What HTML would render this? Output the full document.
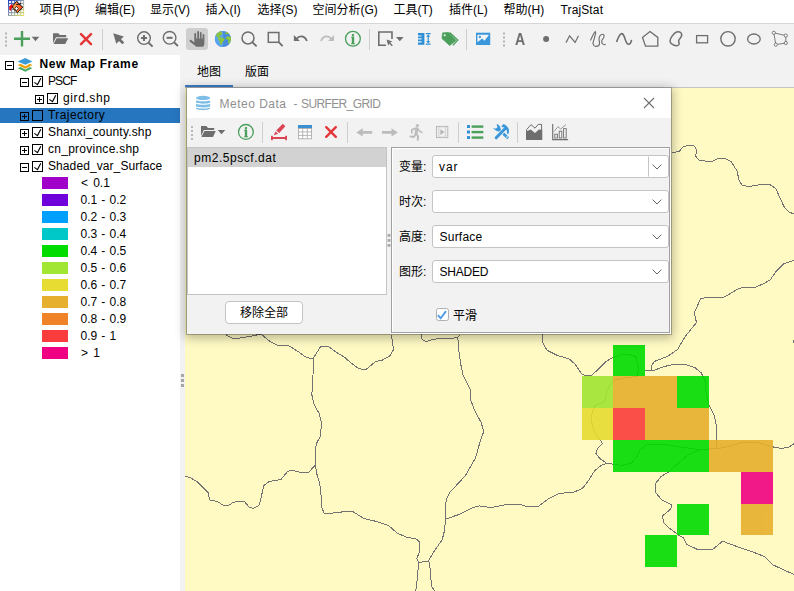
<!DOCTYPE html>
<html lang="zh-CN">
<head>
<meta charset="utf-8">
<title>MeteoInfoMap - TrajStat</title>
<style>
html,body{margin:0;padding:0;}
body{width:794px;height:591px;overflow:hidden;background:#f2f2f2;position:relative;
  font-family:"Liberation Sans","Noto Sans CJK SC",sans-serif;font-size:12px;color:#000;}
.abs{position:absolute;}
.t{position:absolute;white-space:nowrap;line-height:16px;height:16px;font-size:12px;}
#menubar{position:absolute;left:0;top:0;width:794px;height:23px;background:#fff;border-bottom:1px solid #d6d6d6;}
#toolbar{position:absolute;left:0;top:24px;width:794px;height:31px;background:#f2f2f2;}
#tree{position:absolute;left:0;top:55px;width:180px;height:536px;background:#fff;}
#tabs{position:absolute;left:185px;top:55px;width:609px;height:32px;background:#f2f2f2;border-bottom:1px solid #c4c4c4;}
#map{position:absolute;left:185px;top:88px;width:609px;height:503px;background:#fffac4;overflow:hidden;}
#dlg{position:absolute;left:187px;top:88px;width:484px;height:246px;background:#f2f2f2;
  box-shadow:0 2px 10px 2px rgba(0,0,0,.28);}
svg{position:absolute;overflow:visible;}
.sw{position:absolute;left:42px;width:26px;height:12px;}
.xb{position:absolute;width:7px;height:7px;border:1px solid #000;background:#fff;}
.xb i{position:absolute;left:1px;top:3px;width:5px;height:1px;background:#000;}
.xb b{position:absolute;left:3px;top:1px;width:1px;height:5px;background:#000;}
.cb{position:absolute;width:9px;height:9px;border:1px solid #000;background:#fff;}
.combo{position:absolute;left:432px;width:235px;height:21px;border:1px solid #c4c4c4;border-radius:3px;background:#fff;}
.combo span{position:absolute;left:7px;top:3px;line-height:16px;font-size:12px;}
.lbl{position:absolute;left:399px;line-height:16px;font-size:12px;}
</style>
</head>
<body>

<!-- ===== menu bar ===== -->
<div id="menubar">
  <span class="t" style="left:39.5px;top:2px">项目(P)</span>
  <span class="t" style="left:95px;top:2px">编辑(E)</span>
  <span class="t" style="left:150px;top:2px">显示(V)</span>
  <span class="t" style="left:205.5px;top:2px">插入(I)</span>
  <span class="t" style="left:257.5px;top:2px">选择(S)</span>
  <span class="t" style="left:312.5px;top:2px">空间分析(G)</span>
  <span class="t" style="left:393.5px;top:2px">工具(T)</span>
  <span class="t" style="left:449px;top:2px">插件(L)</span>
  <span class="t" style="left:503.5px;top:2px">帮助(H)</span>
  <span class="t" style="left:560.5px;top:2px;letter-spacing:.13px">TrajStat</span>
</div>

<!-- ===== main toolbar ===== -->
<div id="toolbar"></div>

<!-- ===== layer tree ===== -->
<div id="tree">
  <div class="abs" style="left:0;top:53px;width:180px;height:15px;background:#2675bf"></div>

  <div class="xb" style="left:5px;top:6px"><i></i></div>
  <span class="t" style="left:39.5px;top:1px;font-weight:bold;letter-spacing:.6px">New Map Frame</span>

  <div class="xb" style="left:20px;top:23px"><i></i></div>
  <div class="cb" style="left:32px;top:21px"></div>
  <span class="t" style="left:48px;top:18px;letter-spacing:-.9px">PSCF</span>

  <div class="xb" style="left:35px;top:40px"><i></i><b></b></div>
  <div class="cb" style="left:47px;top:38px"></div>
  <span class="t" style="left:63px;top:35px;letter-spacing:.6px">gird.shp</span>

  <div class="xb" style="left:20px;top:57px;background:transparent"><i></i><b></b></div>
  <div class="cb" style="left:32px;top:55px;background:transparent"></div>
  <span class="t" style="left:48px;top:52px;letter-spacing:.44px">Trajectory</span>

  <div class="xb" style="left:20px;top:74px"><i></i><b></b></div>
  <div class="cb" style="left:32px;top:72px"></div>
  <span class="t" style="left:48px;top:69px;letter-spacing:.18px">Shanxi_county.shp</span>

  <div class="xb" style="left:20px;top:91px"><i></i><b></b></div>
  <div class="cb" style="left:32px;top:89px"></div>
  <span class="t" style="left:48px;top:86px;letter-spacing:.26px">cn_province.shp</span>

  <div class="xb" style="left:20px;top:108px"><i></i></div>
  <div class="cb" style="left:32px;top:106px"></div>
  <span class="t" style="left:48px;top:103px;letter-spacing:.09px">Shaded_var_Surface</span>

  <div class="sw" style="top:122px;background:#a000c8"></div><span class="t" style="left:81px;top:120px;word-spacing:1.8px">&lt; 0.1</span>
  <div class="sw" style="top:139px;background:#6e00dc"></div><span class="t" style="left:80.5px;top:137px;word-spacing:.85px">0.1 - 0.2</span>
  <div class="sw" style="top:156px;background:#00a0ff"></div><span class="t" style="left:80.5px;top:154px;word-spacing:.85px">0.2 - 0.3</span>
  <div class="sw" style="top:173px;background:#00c8c8"></div><span class="t" style="left:80.5px;top:171px;word-spacing:.85px">0.3 - 0.4</span>
  <div class="sw" style="top:190px;background:#00dc00"></div><span class="t" style="left:80.5px;top:188px;word-spacing:.85px">0.4 - 0.5</span>
  <div class="sw" style="top:207px;background:#a0e632"></div><span class="t" style="left:80.5px;top:205px;word-spacing:.85px">0.5 - 0.6</span>
  <div class="sw" style="top:224px;background:#e6dc32"></div><span class="t" style="left:80.5px;top:222px;word-spacing:.85px">0.6 - 0.7</span>
  <div class="sw" style="top:241px;background:#e6af2d"></div><span class="t" style="left:80.5px;top:239px;word-spacing:.85px">0.7 - 0.8</span>
  <div class="sw" style="top:258px;background:#f08228"></div><span class="t" style="left:80.5px;top:256px;word-spacing:.85px">0.8 - 0.9</span>
  <div class="sw" style="top:275px;background:#fa3c3c"></div><span class="t" style="left:80.5px;top:273px;word-spacing:.85px">0.9 - 1</span>
  <div class="sw" style="top:292px;background:#f00082"></div><span class="t" style="left:81px;top:290px;word-spacing:1.8px">&gt; 1</span>
</div>

<!-- splitter grip -->
<div class="abs" style="left:181px;top:374px;width:3px;height:3px;background:#a6a6a6;box-shadow:0 5px 0 #a6a6a6,0 10px 0 #a6a6a6"></div>

<!-- ===== tab header ===== -->
<div id="tabs">
  <span class="t" style="left:12px;top:9px">地图</span>
  <span class="t" style="left:60px;top:9px">版面</span>
  <div class="abs" style="left:0;top:30px;width:48px;height:2px;background:#3a7ecb"></div>
</div>

<!-- ===== map ===== -->
<div id="map">
<!--MAPSVG-->
<svg width="609" height="503" viewBox="0 0 609 503" style="left:0;top:0">
<g fill="none" stroke="#727272" stroke-width="1" stroke-linejoin="round" shape-rendering="crispEdges">
<path d="M40.6 246.5 L47.7 250.5 L54.8 250.1 L67.0 248.0 L76.1 246.0 L85.3 253.8 L92.4 257.2 L103.6 257.6 L112.7 263.3 L121.8 269.8 L128.3 270.4 L132.0 264.3 L135.6 258.6 L143.2 258.2 L151.3 264.3 L160.0 269.4 L163.1 272.5 L172.3 279.6 L177.3 281.6 L181.4 281.2 L190.5 273.5 L197.6 272.0 L205.4 267.4 L208.4 261.7 L207.4 252.2 L205.8 246.5"/>
<path d="M128.3 270.4 L128.5 280.6 L127.5 292.8 L126.9 307.0 L128.9 316.1 L134.0 325.2 L136.4 334.4 L135.6 347.6 L131.5 355.5 L130.9 359.0 L130.4 377.0 L131.6 385.2 L134.7 395.5 L136.2 408.2 L136.7 419.7 L139.3 425.4 L147.0 425.1 L160.0 423.6 L167.8 423.6 L179.3 430.7 L190.8 433.3 L203.6 437.6 L212.5 445.3 L221.5 449.1 L231.7 451.2 L234.7 454.2 L234.2 464.5 L231.7 470.8 L233.7 474.2 L244.0 473.6"/>
<path d="M130.4 377.0 L124.0 384.0 L116.3 384.5 L106.1 382.2 L102.2 384.0 L95.8 391.6 L84.3 393.4 L78.7 397.5 L76.7 407.0 L74.1 417.2 L68.5 420.5 L63.9 419.0 L59.3 413.3 L48.6 414.1 L44.0 417.2 L38.3 417.2 L31.9 413.3 L24.8 412.0 L23.0 404.4 L12.8 394.2 L5.1 389.6 L0.0 388.3"/>
<path d="M236.2 246.5 L237.2 251.7 L241.3 253.6 L248.4 251.1 L264.6 250.5 L272.8 249.5 L275.2 246.5"/>
<path d="M272.8 249.5 L273.8 262.3 L275.8 276.5 L278.2 287.7 L285.4 301.5 L285.6 312.0 L290.0 323.2 L296.1 334.4 L298.8 343.5 L295.6 352.0 L290.5 369.9 L280.2 387.8 L264.9 404.4 L261.1 412.1 L260.3 431.2 L259.8 441.5 L257.2 451.7 L248.3 464.5 L243.2 473.4"/>
<path d="M260.3 431.2 L275.1 426.1 L287.9 419.7 L294.3 417.9 L303.2 419.2 L308.6 419.1 L322.3 416.4 L334.5 416.1 L341.3 418.3 L353.6 418.3 L364.5 410.1 L374.0 405.5 L389.0 404.1 L397.2 400.6 L402.7 393.8 L409.5 382.9 L416.3 377.4 L421.7 375.3"/>
<path d="M233.7 474.2 L232.4 490.0 L230.7 503.0"/>
<path d="M244.5 474.2 L245.7 487.5 L246.5 498.2 L249.6 503.0"/>
<path d="M357.3 246.5 L357.5 254.2 L362.0 262.3 L372.2 267.4 L384.3 271.0 L390.4 276.5 L396.5 285.7 L400.6 287.9 L406.7 287.1 L411.8 282.6 L420.9 273.5 L428.0 269.4 L437.1 266.8 L445.3 266.4 L451.3 269.4 L453.4 280.6 L452.4 288.3 L441.2 289.7 L430.0 291.7 L425.0 296.8 L421.9 302.9 L419.9 313.0 L410.7 317.5 L407.3 323.2 L406.3 331.3 L407.7 339.5 L411.8 347.6 L414.8 351.6 L417.6 355.6 L412.7 360.5 L410.8 365.2 L414.9 370.6 L421.7 375.3 L428.0 376.1 L436.7 377.4 L446.3 375.3 L451.7 369.3 L454.5 362.4 L461.3 357.0 L476.3 356.2 L495.3 358.9 L514.4 361.6 L524.0 361.1 L538.9 359.7 L558.0 354.3 L571.7 354.3 L588.0 358.9 L596.2 360.5 L604.4 358.9 L609.0 355.6"/>
<path d="M609.0 172.2 L598.6 175.7 L591.6 182.8 L585.4 191.6 L579.3 195.4 L570.5 199.1 L558.2 199.5 L552.0 201.3 L546.7 204.8 L538.8 209.2 L522.1 209.5 L515.6 210.6 L512.4 218.0 L509.4 224.1 L510.3 229.4 L511.5 234.7 L506.3 240.8 L500.1 248.7 L495.7 256.0 L492.7 261.3 L482.5 268.4 L469.3 273.5 L466.3 278.5 L466.3 282.2"/>
<path d="M460.2 282.6 L469.3 282.2 L479.5 278.5 L489.6 276.1 L501.8 276.9 L509.9 279.6 L516.0 284.6 L520.1 292.8 L521.1 304.9 L524.1 317.1 L529.2 327.3 L531.2 337.4 L531.6 351.6 L532.1 361.1"/>
<path d="M486.6 65.2 L494.2 63.2 L498.5 58.6 L504.4 57.2 L509.5 58.1 L511.5 62.3 L510.7 68.2 L514.5 72.8 L527.2 73.3 L533.2 70.4 L539.9 70.3 L545.9 73.3 L551.8 82.6 L554.3 92.8 L557.7 97.9 L566.2 98.2 L576.3 96.5 L584.8 96.5 L590.7 100.4 L594.9 109.7 L599.2 119.0 L604.3 124.1 L609.0 126.1"/>
<path d="M608.3 252.0 L609.0 254.5"/>
<path d="M515.8 361.6 L503.5 366.5 L494.0 374.7 L484.4 383.4 L476.3 388.3 L470.8 395.1 L470.8 404.7 L476.3 411.5 L486.6 417.0 L485.8 421.0 L477.6 427.9 L478.4 434.7 L484.4 440.1 L492.6 446.4 L498.1 449.7 L502.1 456.5 L511.7 461.1 L528.0 461.1 L537.6 453.2 L549.8 457.8 L566.2 463.3 L579.8 468.7 L588.0 476.9 L609.0 486.5"/>
</g>
<g opacity="0.9">
<rect x="428" y="257" width="32" height="31" fill="#00dc00"/>
<rect x="397" y="288" width="31" height="32" fill="#a0e632"/>
<rect x="428" y="288" width="64" height="32" fill="#e6af2d"/>
<rect x="492" y="288" width="32" height="32" fill="#00dc00"/>
<rect x="397" y="320" width="31" height="32" fill="#e6dc32"/>
<rect x="428" y="320" width="32" height="32" fill="#fa3c3c"/>
<rect x="460" y="320" width="64" height="32" fill="#e6af2d"/>
<rect x="428" y="352" width="96" height="32" fill="#00dc00"/>
<rect x="524" y="352" width="64" height="32" fill="#e6af2d"/>
<rect x="556" y="384" width="32" height="32" fill="#f00082"/>
<rect x="492" y="416" width="32" height="31" fill="#00dc00"/>
<rect x="556" y="416" width="32" height="31" fill="#e6af2d"/>
<rect x="460" y="447" width="32" height="32" fill="#00dc00"/>
</g>
</svg>
<!--/MAPSVG-->
</div>

<!-- ===== dialog ===== -->
<div id="dlg">
  <div class="abs" style="left:-1px;top:-1px;width:484px;height:246px;border:1px solid rgba(0,0,0,.26);border-top-color:rgba(0,0,0,.12)"></div>
  <div class="abs" style="left:0;top:0;width:484px;height:30px;background:#fff"></div>
  <span class="t" style="left:32.5px;top:7.5px;color:#909090;letter-spacing:.5px">Meteo Data</span><span class="t" style="left:106.5px;top:7.5px;color:#909090">-</span><span class="t" style="left:114px;top:7.5px;color:#909090;letter-spacing:-.62px">SURFER_GRID</span>
  <!-- file list -->
  <div class="abs" style="left:0;top:59px;width:198px;height:146px;background:#fff;border:1px solid #c4c4c4"></div>
  <div class="abs" style="left:1px;top:60px;width:198px;height:18.5px;background:#d2d2d2"></div>
  <span class="t" style="left:7px;top:61.5px;letter-spacing:.53px">pm2.5pscf.dat</span>
  <div class="abs" style="left:38px;top:213px;width:76px;height:21px;border:1px solid #c4c4c4;border-radius:4px;background:#fff"></div>
  <span class="t" style="left:53px;top:217px">移除全部</span>
  <!-- right panel -->
  <div class="abs" style="left:205px;top:60px;width:277px;height:184px;border:1px solid #fff"></div>
  <div class="abs" style="left:204px;top:59px;width:277px;height:184px;border:1px solid #a0a0a0"></div>
  <span class="lbl" style="top:71px;left:212px">变量:</span>
  <span class="lbl" style="top:106px;left:212px">时次:</span>
  <span class="lbl" style="top:141px;left:212px">高度:</span>
  <span class="lbl" style="top:176px;left:212px">图形:</span>
  <div class="combo" style="left:245px;top:67px"><span style="left:6px;letter-spacing:.95px">var</span></div>
  <div class="combo" style="left:245px;top:102px"><span></span></div>
  <div class="combo" style="left:245px;top:137px"><span style="left:6.5px;letter-spacing:.23px">Surface</span></div>
  <div class="combo" style="left:245px;top:172px"><span style="left:6.5px;letter-spacing:-.2px">SHADED</span></div>
  <div class="abs" style="left:248.5px;top:220.4px;width:11px;height:11px;border:1px solid #b0b0b0;border-radius:2.5px;background:#fff"></div>
  <span class="t" style="left:266px;top:220px">平滑</span>
</div>

<!--ICOTOP-->
<svg id="ico-top" width="794" height="56" viewBox="0 0 794 56" style="left:0;top:0">
<!-- app icon -->
<defs>
<linearGradient id="appg" x1="0" y1="0" x2="1" y2="1"><stop offset="0" stop-color="#1d3cc4"/><stop offset="0.5" stop-color="#8f9fb0"/><stop offset="1" stop-color="#e8e860"/></linearGradient>
<linearGradient id="appo" x1="0" y1="0" x2="1" y2="0"><stop offset="0" stop-color="#ffb050"/><stop offset="1" stop-color="#ff3c1c"/></linearGradient>
</defs>
<g id="appicon">
<rect x="8" y="0" width="16.1" height="16" fill="url(#appg)"/>
<g fill="#ffffff"><rect x="9.05" y="1.07" width="1.95" height="1.85"/><rect x="9.05" y="4.09" width="1.95" height="1.85"/><rect x="9.05" y="7.11" width="1.95" height="1.85"/><rect x="9.05" y="10.13" width="1.95" height="1.85"/><rect x="9.05" y="13.15" width="1.95" height="1.85"/><rect x="12.10" y="1.07" width="1.95" height="1.85"/><rect x="12.10" y="4.09" width="1.95" height="1.85"/><rect x="12.10" y="7.11" width="1.95" height="1.85"/><rect x="12.10" y="10.13" width="1.95" height="1.85"/><rect x="12.10" y="13.15" width="1.95" height="1.85"/><rect x="15.15" y="1.07" width="1.95" height="1.85"/><rect x="15.15" y="4.09" width="1.95" height="1.85"/><rect x="15.15" y="7.11" width="1.95" height="1.85"/><rect x="15.15" y="10.13" width="1.95" height="1.85"/><rect x="15.15" y="13.15" width="1.95" height="1.85"/><rect x="18.20" y="1.07" width="1.95" height="1.85"/><rect x="18.20" y="4.09" width="1.95" height="1.85"/><rect x="18.20" y="7.11" width="1.95" height="1.85"/><rect x="18.20" y="10.13" width="1.95" height="1.85"/><rect x="18.20" y="13.15" width="1.95" height="1.85"/><rect x="21.25" y="1.07" width="1.95" height="1.85"/><rect x="21.25" y="4.09" width="1.95" height="1.85"/><rect x="21.25" y="7.11" width="1.95" height="1.85"/><rect x="21.25" y="10.13" width="1.95" height="1.85"/><rect x="21.25" y="13.15" width="1.95" height="1.85"/></g>
<path d="M12.6 4.2 C10.6 4.4 9.2 6 9.2 8 C9.2 9.6 10 10.6 10.6 11 L11.4 8.6 L12.8 8 L12.8 4.6 Z" fill="#fb0505"/>
<path d="M16.5 1.4 L22.8 7.3 L17.4 12.7 L12.8 8.2 L12.9 5.6 Z" fill="url(#appo)" stroke="#000" stroke-width="0.9" stroke-linejoin="round"/>
<path d="M16.4 6.5 L18.5 8.5 L16.5 10.6 L14.6 8.7 Z" fill="#fff" stroke="#000" stroke-width="0.7"/>
<path d="M16.2 4.6 L19.6 4.2 L21 3.2" stroke="#000" stroke-width="0.8" fill="none"/>
</g>
<!-- grips -->
<g fill="#b4b4b4">
<rect x="5" y="32.5" width="2" height="2"/><rect x="5" y="36.5" width="2" height="2"/><rect x="5" y="40.5" width="2" height="2"/><rect x="5" y="44.5" width="2" height="2"/>
<rect x="503" y="32.5" width="2" height="2"/><rect x="503" y="36.5" width="2" height="2"/><rect x="503" y="40.5" width="2" height="2"/><rect x="503" y="44.5" width="2" height="2"/>
</g>
<!-- separators -->
<g stroke="#cecece" stroke-width="1"><path d="M102.5 29v21M369.5 29v21M466.5 29v21"/></g>
<!-- plus + arrow -->
<path d="M14 38.8h16M22 31v15.6" stroke="#4a9f5b" stroke-width="2.4" fill="none"/>
<path d="M31.7 36.8h7.6l-3.8 4.4z" fill="#6e6e6e"/>
<!-- folder -->
<g fill="#6e6e6e">
<path d="M53 33.2h5.3l1.6 1.8h6.3v2.3h-10.2l-3 6z"/>
<path d="M56.6 38.2h11.6l-3 5.8h-11.6z"/>
</g>
<!-- red X -->
<path d="M81 34.2l10 10M91 34.2l-10 10" stroke="#e5373a" stroke-width="2.5" stroke-linecap="round" fill="none"/>
<!-- pointer -->
<path d="M113.2 33.2l10.6 3.4-7.5 7.2z" fill="#6e6e6e"/>
<path d="M119.4 39.5l3.9 3.9" stroke="#6e6e6e" stroke-width="2.7" fill="none"/>
<!-- zoom in -->
<g stroke="#6e6e6e" fill="none" stroke-width="1.4">
<circle cx="144" cy="38.1" r="6.3"/><path d="M141 38.1h6M144 35.1v6" stroke-width="2"/><path d="M148.6 42.7l4 3.9" stroke-width="2"/>
<circle cx="169.6" cy="37.8" r="6.3"/><path d="M166.6 37.8h6" stroke-width="2"/><path d="M174.2 42.4l3.7 3.6" stroke-width="2"/>
</g>
<!-- hand (selected) -->
<rect x="186" y="28" width="22" height="22" rx="3" fill="#cfcfcf"/>
<path d="M194.3 42.5V33.9a.9 .9 0 0 1 1.8 0V38.4h1.1V32a.9 .9 0 0 1 1.8 0V38.4h.9V32.8a.85 .85 0 0 1 1.7 0V38.4h1V34.8a.9 .9 0 0 1 1.8 0V43.2C204.4 45 203.6 46.7 202.6 46.7H196.4L190 41.7C188.9 40.6 190.2 39.1 191.4 40z" fill="#6e6e6e"/>
<!-- globe -->
<circle cx="223" cy="39" r="8.1" fill="#4a8cdc"/>
<path d="M223 30.9 A8.1 8.1 0 0 0 223 47.1z" fill="#5aa2f2"/>
<clipPath id="gclip"><circle cx="223" cy="39" r="8.1"/></clipPath>
<g clip-path="url(#gclip)" fill="#8cc63c" stroke="#8cc63c" stroke-width="0.5" stroke-linejoin="round">
<path d="M220.7 31.1 L222.0 33.1 L221.6 34.7 L219.1 35.5 L218.5 36.3 L220.3 37.2 L221.6 38.0 L223.6 38.2 L224.6 39.4 L223.2 41.0 L222.0 42.8 L221.4 44.5 L220.3 44.5 L219.7 41.2 L218.3 39.2 L218.1 37.6 L216.5 36.1 L216.1 34.7 L217.5 32.7 L219.5 31.3z"/><path d="M225.2 33.5 L226.4 32.1 L228.1 32.3 L228.9 33.7 L227.2 33.9z"/><path d="M226.0 38.0 L227.2 36.5 L229.3 36.9 L230.9 36.7 L231.0 40.4 L229.9 43.2 L228.5 43.2 L228.1 42.2 L228.9 40.8 L228.1 39.4 L226.6 39.0z"/>
</g>
<!-- search -->
<g stroke="#6e6e6e" fill="none" stroke-width="1.5">
<circle cx="248" cy="37.9" r="6"/><path d="M252.4 42.3l4.2 4.1" stroke-width="1.8"/>
<rect x="268.3" y="32.5" width="10.6" height="9.8"/><path d="M279 42.4l3.6 3.7" stroke-width="1.8"/>
</g>
<!-- undo / redo -->
<path d="M296.4 39 C299.4 35.2 304.6 35.4 306.9 41" stroke="#6e6e6e" stroke-width="1.8" fill="none"/>
<path d="M293.9 35v6h6z" fill="#6e6e6e"/>
<path d="M331.5 39 C328.5 35.2 323.3 35.4 321 41" stroke="#bdbdbd" stroke-width="1.8" fill="none"/>
<path d="M334 35v6h-6z" fill="#bdbdbd"/>
<!-- info -->
<circle cx="352.9" cy="38.7" r="7.4" stroke="#4a9f5b" stroke-width="1.3" fill="none"/>
<text x="352.9" y="43.6" font-family="Liberation Serif,serif" font-weight="bold" font-size="14" fill="#4a9f5b" stroke="#4a9f5b" stroke-width="0.35" text-anchor="middle" style="filter:opacity(.999)">i</text>
<!-- select rect -->
<path d="M386 45.2h-7.2v-13.2h13.2v7" stroke="#6e6e6e" stroke-width="1.6" fill="none"/>
<path d="M386.6 39.6l5.8 2-2.2 1 2.6 2.6-1 1-2.6-2.6-1 2.2z" fill="#6e6e6e"/>
<path d="M396 37h7.6l-3.8 4.3z" fill="#6e6e6e"/>
<!-- measure -->
<g fill="#2e8fd6">
<path d="M418 33h6.4v11.8h-6.4z"/>
<path d="M425.8 33h4.8v1.2h-4.8zM425.8 43.6h4.8v1.2h-4.8z"/>
<path d="M428.2 34.3l2 2.5h-4zM428.2 43.5l2-2.5h-4z"/>
<rect x="427.6" y="36" width="1.2" height="6"/>
</g>
<path d="M418 36h3.6M418 38.9h3.6M418 41.8h3.6" stroke="#e8f2fa" stroke-width="1.2"/>
<!-- tags -->
<path d="M449.6 32.5l8.2 7.5-4.9 5.2" stroke="#4a9f5b" stroke-width="1.3" fill="none"/>
<path d="M442.6 32.9l6-.4 7.3 7.8-6.2 5.2-7.7-7z" fill="#4a9f5b" stroke="#4a9f5b" stroke-width=".8" stroke-linejoin="round"/>
<circle cx="444.7" cy="35.2" r="1.05" fill="#f2f2f2"/>
<!-- image -->
<rect x="476" y="32.7" width="14.2" height="12.3" fill="#3a97dc"/>
<path d="M477.4 34.7h11.2v.7l-4.2 5.3-2.3-2.2-4.7 3.8z" fill="#f4f4f4"/>
<circle cx="479.9" cy="37" r="1.15" fill="#3a97dc"/>
<!-- A -->
<text x="0" y="0" transform="translate(520.1 44.8) scale(.88 1)" font-family="Liberation Sans,sans-serif" font-weight="bold" font-size="16" fill="#6e6e6e" text-anchor="middle" style="filter:opacity(.999)">A</text>
<!-- dot -->
<circle cx="546.1" cy="39.1" r="3" fill="#6e6e6e"/>
<!-- polyline -->
<path d="M566 42.6l3.6-6.8 5.5 6.6 3.4-6.6" stroke="#6e6e6e" stroke-width="1.2" fill="none"/>
<!-- freehand -->
<path d="M590.4 40.4 C592 37 594.4 31.6 595.3 31.6 C596.2 31.8 595 35.4 594.6 37.3 C594 40 592.6 42.4 593.1 43.8 C593.6 45.6 594.4 46.4 595.6 46.4 C597.2 46.4 598.4 46.2 598.9 45.4 C599.6 44.4 599.6 43.6 599.5 42.3 C599.4 40.6 598.8 39.6 599.1 38.1 C599.4 36.4 600 35.2 601 34.7 C602 34.2 603.2 34.1 603.7 34.7 C604.3 35.4 604.2 36.4 603.8 37.3 C603.4 38.6 602 39.6 601.8 40.7 C601.6 42 601.8 43.2 602.6 43.9 C603.4 44.6 604.6 44.7 605.6 44.4" stroke="#6e6e6e" stroke-width="1.15" fill="none"/>
<!-- curve -->
<path d="M616.5 42 C618.2 37.6 619.6 33.6 621.8 33.6 C624 33.6 624.4 37.6 625.3 39.7 C626.2 41.8 626.6 44.2 628.4 44.2 C630.2 44.2 631.2 42.2 631.5 39.8" stroke="#6e6e6e" stroke-width="1.6" fill="none"/>
<!-- pentagon -->
<path d="M650 31.6l7.8 5.8v8.8h-12.3l-3-8.7z" stroke="#6e6e6e" stroke-width="1.3" fill="none" stroke-linejoin="miter"/>
<!-- blob -->
<path d="M680.6 32.5 C679.4 31.6 677.8 31.7 676.6 32 C674.8 32.6 673.4 34.2 672.3 35.8 C671.2 37.4 670.2 38.8 670.1 40.6 C670 42 670.6 43 671.6 43.8 C673 45 675 45.9 676.6 45.8 C677.8 45.7 678.8 45.4 679.1 44.4 C679.4 43.2 678.4 41.8 678.7 40.4 C679.2 38.8 680.8 37.8 681.4 36.4 C681.9 35 681.8 33.4 680.6 32.5z" stroke="#6e6e6e" stroke-width="1.5" fill="none"/>
<!-- rect -->
<rect x="696.6" y="35.6" width="11" height="7.2" stroke="#6e6e6e" stroke-width="1.3" fill="none"/>
<!-- circle -->
<circle cx="728" cy="38.8" r="7.2" stroke="#6e6e6e" stroke-width="1.4" fill="none"/>
<!-- ellipse -->
<ellipse cx="753.9" cy="39" rx="6.3" ry="5" stroke="#6e6e6e" stroke-width="1.3" fill="none"/>
<!-- quad with nodes -->
<path d="M773.8 32.8l12 2.8v7.4l-10 1.6z" stroke="#6e6e6e" stroke-width="0.9" fill="none"/>
<g fill="#fafafa" stroke="#6e6e6e" stroke-width="0.9"><circle cx="773.8" cy="32.8" r="1.6"/><circle cx="785.8" cy="35.6" r="1.6"/><circle cx="785.8" cy="43" r="1.6"/><circle cx="775.8" cy="44.6" r="1.6"/></g>
</svg>

<!--/ICOTOP-->
<!--ICOTREE-->
<svg id="ico-tree" width="180" height="200" viewBox="0 0 180 200" style="left:0;top:0">
<path d="M25.3 57.9L32.4 61.4 25.3 64.8 17.6 61.4z" fill="#3b9ad8"/>
<path d="M17.6 65.1L20.6 63.7 25.3 66.3 29.8 63.7 32.4 65.1 25.3 68.8z" fill="#f0a20c"/>
<path d="M17.6 68.2L20.6 66.9 25.3 69.5 29.8 66.9 32.4 68.2 25.3 71.8z" fill="#4cab6c"/>
<path d="M34.4 82.4l3.1 2.2 3.3-6.4" stroke="#000" stroke-width="1.1" fill="none"/>
<path d="M49.4 99.4l3.1 2.2 3.3-6.4" stroke="#000" stroke-width="1.1" fill="none"/>
<path d="M34.4 133.4l3.1 2.2 3.3-6.4" stroke="#000" stroke-width="1.1" fill="none"/>
<path d="M34.4 150.4l3.1 2.2 3.3-6.4" stroke="#000" stroke-width="1.1" fill="none"/>
<path d="M34.4 167.4l3.1 2.2 3.3-6.4" stroke="#000" stroke-width="1.1" fill="none"/>
</svg>
<!--/ICOTREE-->
<!--ICODLG-->
<svg id="ico-dlg" width="794" height="340" viewBox="0 0 794 340" style="left:0;top:0">
<!-- title db icon -->
<g fill="#7dbde6">
<ellipse cx="203.1" cy="97.9" rx="7.1" ry="2.1"/>
<path d="M196 100.2 C198 101.6 208.2 101.6 210.2 100.2 V102.6 C208.2 104.2 198 104.2 196 102.6z"/>
<path d="M196 103.8 C198 105.2 208.2 105.2 210.2 103.8 V106.2 C208.2 107.8 198 107.8 196 106.2z"/>
<path d="M196 107.4 C198 108.8 208.2 108.8 210.2 107.4 V108.8 C208.2 110.6 198 110.6 196 108.8z"/>
</g>
<!-- close X -->
<path d="M644 98l10 10M654 98l-10 10" stroke="#707070" stroke-width="1.1" fill="none"/>
<!-- grip -->
<g fill="#b8b8b8"><rect x="191" y="126" width="2" height="2"/><rect x="191" y="130" width="2" height="2"/><rect x="191" y="134" width="2" height="2"/><rect x="191" y="138" width="2" height="2"/></g>
<!-- separators -->
<path d="M262.5 122v21M347.5 122v21M458.5 122v21M517.5 122v21" stroke="#cecece" stroke-width="1"/>
<!-- folder + arrow -->
<g fill="#6e6e6e">
<path d="M201 126h5.4l1.6 1.9h6.2v2.2h-10.4l-2.8 6z"/>
<path d="M204.4 131h11.4l-2.8 6h-11.6z"/>
<path d="M217.7 129.9h7.6l-3.8 4.3z"/>
</g>
<!-- info -->
<circle cx="245.9" cy="131.9" r="7.4" stroke="#4a9f5b" stroke-width="1.3" fill="none"/>
<text x="245.9" y="136.8" font-family="Liberation Serif,serif" font-weight="bold" font-size="14" fill="#4a9f5b" stroke="#4a9f5b" stroke-width="0.35" text-anchor="middle" style="filter:opacity(.999)">i</text>
<!-- pencil line -->
<g fill="#db4453">
<path d="M282.7 123.7l2.7 2.5-6.2 6.7-2.9-2.4z"/>
<path d="M275.6 131.4l2.6 2.3-4.5 1.6z"/>
<rect x="271" y="137" width="16" height="2"/>
<rect x="271" y="135.8" width="1.8" height="4.4"/><rect x="285.2" y="135.8" width="1.8" height="4.4"/>
</g>
<!-- table -->
<rect x="298" y="125" width="14" height="3.4" fill="#3a8fd0"/>
<rect x="298.4" y="128.4" width="13.2" height="10.4" fill="#fff" stroke="#a6a6a6" stroke-width="0.8"/>
<path d="M302.7 128.4v10.4M307.3 128.4v10.4M298.4 131.9h13.2M298.4 135.4h13.2" stroke="#a6a6a6" stroke-width="0.8"/>
<!-- red X -->
<path d="M326.2 127.2l9.6 9.6M335.8 127.2l-9.6 9.6" stroke="#e5373a" stroke-width="2.4" stroke-linecap="round" fill="none"/>
<!-- disabled arrows -->
<g fill="#bcbcbc">
<path d="M356.3 132.4l6.4-4.2v2.8h9.5v2.8h-9.5v2.8z"/>
<path d="M397.9 132.4l-6.4-4.2v2.8h-9.5v2.8h9.5v2.8z"/>
<circle cx="417.4" cy="125.5" r="1.6"/>
</g>
<g stroke="#bcbcbc" fill="none" stroke-linecap="round" stroke-linejoin="round">
<path d="M416.8 128.8l-.7 4.6" stroke-width="3"/>
<path d="M415.4 128.4l-3.6 1.4v3" stroke-width="1.7"/>
<path d="M418 129l2 2.6 2 .8" stroke-width="1.6"/>
<path d="M415.8 134l-2 3-3.4-.6" stroke-width="2"/>
<path d="M416.6 134l1.4 2.2-.2 3.6" stroke-width="2"/>
</g>
<!-- play frame -->
<rect x="436.4" y="126.4" width="11.4" height="11.2" fill="#e4e4e4" stroke="#b4b4b4" stroke-width="0.9"/>
<rect x="439" y="127" width="6.2" height="10" fill="#f0f0f0" stroke="#c4c4c4" stroke-width="0.5"/>
<path d="M440.4 129.2v5.8l4-2.9z" fill="#b4b4b4"/>
<g fill="#f6f6f6"><rect x="437.1" y="127.6" width="1.1" height="1.4"/><rect x="437.1" y="130.4" width="1.1" height="1.4"/><rect x="437.1" y="133.2" width="1.1" height="1.4"/><rect x="437.1" y="135.8" width="1.1" height="1.2"/><rect x="446" y="127.6" width="1.1" height="1.4"/><rect x="446" y="130.4" width="1.1" height="1.4"/><rect x="446" y="133.2" width="1.1" height="1.4"/><rect x="446" y="135.8" width="1.1" height="1.2"/></g>
<!-- list -->
<g fill="#2e8fd6"><rect x="467" y="125.1" width="3" height="3" rx=".5"/><rect x="467" y="130.6" width="3" height="3" rx=".5"/><rect x="467" y="136.1" width="3" height="3" rx=".5"/></g>
<g fill="#4a9f5b"><rect x="471.6" y="125.4" width="11.7" height="2.4"/><rect x="471.6" y="130.9" width="11.7" height="2.4"/><rect x="471.6" y="136.4" width="11.7" height="2.4"/></g>
<!-- tools -->
<g fill="#3a97dc" stroke="none">
<path d="M496.6 124.1 C498.6 124.6 500.3 126.2 500.5 128.2 L501.2 130.4 L499.6 131.6 C497.6 131.8 494.4 130.4 493 127.5 L495.4 128.8 L497.4 127.4z"/>
<path d="M501.3 126.3L503.6 124.1 C506 125.2 508.4 127.4 509 129.8 L508.8 133.8 H507 L506.8 130.8 L505 129.3 L503.4 127.9z"/>
</g>
<path d="M499.8 130.2l7.6 7.2" stroke="#3a97dc" stroke-width="2.8" stroke-linecap="round"/>
<path d="M505.2 128.6l-9.2 9.4" stroke="#f2f2f2" stroke-width="4.4" stroke-linecap="butt"/>
<path d="M505 128.8l-8.8 9" stroke="#3a97dc" stroke-width="3" stroke-linecap="round"/>
<circle cx="507" cy="137.1" r=".8" fill="#f2f2f2"/>
<!-- area chart -->
<path d="M526.6 139.6V129.6l4.4-5 4 3.6 3.2-3.8h3.4V139.6" stroke="#6e6e6e" stroke-width="1" fill="none"/>
<path d="M526.1 140V131.6l4.6-2 4.3 3.4 3.8-3.6 3.4.4V140z" fill="#6e6e6e"/>
<!-- bar chart -->
<g stroke="#6e6e6e" fill="none">
<path d="M552.7 124v15.6h15.4" stroke-width="1.1"/>
<rect x="554.8" y="134.2" width="2.6" height="3.8" stroke-width=".9"/><rect x="559.2" y="131.2" width="2.6" height="6.8" stroke-width=".9"/><rect x="563.6" y="128.6" width="2.6" height="9.4" stroke-width=".9"/>
<path d="M554 131.6l4-5 2.6 2.4 5.4-4.4" stroke-width=".7"/>
</g>
<!-- splitter grip -->
<g fill="#a8a8a8"><rect x="387.6" y="234" width="2.8" height="2.8"/><rect x="387.6" y="239" width="2.8" height="2.8"/><rect x="387.6" y="244" width="2.8" height="2.8"/></g>
<!-- combo arrows -->
<g stroke="#666" stroke-width="1" fill="none">
<path d="M652.6 164.6l4.4 4.4 4.4-4.4"/><path d="M652.6 199.6l4.4 4.4 4.4-4.4"/><path d="M652.6 234.6l4.4 4.4 4.4-4.4"/><path d="M652.6 269.6l4.4 4.4 4.4-4.4"/>
</g>
<path d="M648.5 156.5v20" stroke="#c4c4c4" stroke-width="1"/>
<!-- check -->
<path d="M437.9 315.2L440.7 318.3 446 311.1" stroke="#4e9de7" stroke-width="1.9" fill="none"/>
</svg>

<!--/ICODLG-->
</body>
</html>
